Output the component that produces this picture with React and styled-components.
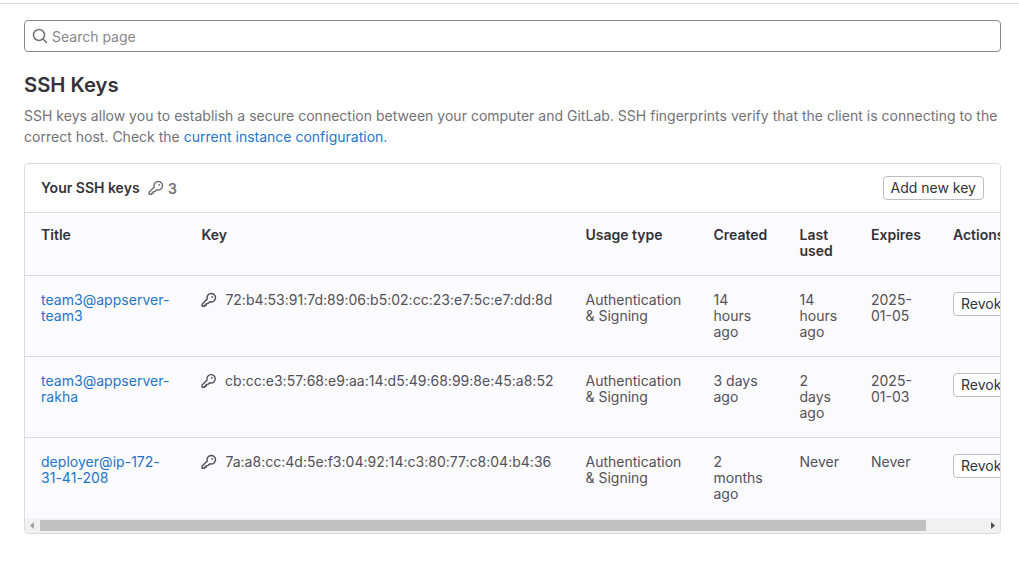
import React from "react";
import styled, { createGlobalStyle } from "styled-components";

const GlobalStyle = createGlobalStyle`
  *, *::before, *::after { box-sizing: border-box; }
  body {
    margin: 0;
    background: #fff;
    color: #333238;
    font-family: Inter, "Noto Sans", sans-serif;
    font-size: 14px;
    line-height: 16px;
  }
`;

const Page = styled.div`
  height: 586px;
  overflow: hidden;
  padding-top: 3px;
`;

const Main = styled.main`
  border-top: 1px solid #dcdcde;
  padding: 16px 18px 0 24px;
`;

const SearchBox = styled.label`
  display: flex;
  align-items: center;
  gap: 4px;
  height: 32px;
  padding: 0 7px;
  border: 1px solid #89888d;
  border-radius: 4px;
  color: #737278;
`;

const SearchInput = styled.input`
  flex: 1;
  min-width: 0;
  padding: 2px 0 0;
  border: 0;
  outline: 0;
  background: transparent;
  font: inherit;
  line-height: 16px;
  &::placeholder { color: #89888d; opacity: 1; }
`;

const Heading = styled.h1`
  margin: 20px 0 8px;
  font-size: 20.3px;
  line-height: 25px;
  font-weight: 600;
  letter-spacing: -0.03px;
`;

const Intro = styled.p`
  margin: 0 0 16px;
  color: #737278;
  line-height: 21px;
  letter-spacing: 0.012px;
`;

const Link = styled.a`
  color: #1f75cb;
  text-decoration: none;
  letter-spacing: 0;
`;

const TitleLink = styled(Link)`
  letter-spacing: 0.03px;
`;

const Card = styled.section`
  border: 1px solid #dcdcde;
  border-radius: 4px;
  overflow: hidden;
  background: #fbfafd;
`;

const CardHeader = styled.header`
  display: flex;
  align-items: center;
  height: 49px;
  padding: 0 16px;
  background: #fff;
  border-bottom: 1px solid #dcdcde;
`;

const CardTitle = styled.h2`
  margin: 0 8.7px 0 0;
  font-size: 14px;
  font-weight: 600;
`;

const Count = styled.span`
  display: flex;
  align-items: center;
  gap: 3.8px;
  flex: 1;
  color: #737278;
  font-weight: 600;
`;

const CountValue = styled.span`
  padding-top: 2px;
`;

const Button = styled.button`
  height: 24px;
  padding: 0 7px;
  border: 1px solid #bfbfc3;
  border-radius: 4px;
  background: #fff;
  color: #333238;
  font: inherit;
  line-height: 16px;
  white-space: nowrap;
`;

const Scroller = styled.div`
  overflow: hidden;
`;

const Row = styled.div`
  display: grid;
  grid-template-columns: 160.4px 384.1px 128px 86px 71.5px 82px 107px;
  width: 1019px;
  height: ${(p) => p.$height}px;
  padding-top: ${(p) => p.$top}px;
  border-bottom: ${(p) => (p.$last ? 0 : 1)}px solid #dcdcde;
  color: ${(p) => (p.$head ? "#333238" : "#535158")};
  font-weight: ${(p) => (p.$head ? 600 : 400)};
`;

const Cell = styled.div`
  padding: 0 16px;
`;

const Fingerprint = styled(Cell)`
  display: flex;
  gap: 8px;
  white-space: nowrap;
  letter-spacing: 0.01px;
`;

const Track = styled.div`
  display: flex;
  align-items: center;
  height: 15px;
  background: #f1f1f1;
`;

const ArrowSlot = styled.span`
  display: flex;
  justify-content: flex-start;
  width: 15px;
  padding-left: ${(p) => p.$inset}px;
  color: ${(p) => p.$color};
`;

const ThumbArea = styled.div`
  flex: 1;
`;

const Thumb = styled.div`
  width: 886px;
  height: 11px;
  background: #c1c1c1;
`;

const KeyIcon = () => (
  <svg width="16" height="16" viewBox="0 0 16 16" fill="none" stroke="currentColor" strokeWidth="1.45">
    <path d="M6.25 7.1A4.25 4.25 0 1 1 8.9 9.75L7 11.6H5.2v1.7H3.7v1H1.1v-2.1z" strokeLinejoin="round" />
    <circle cx="11.1" cy="4.9" r=".9" fill="currentColor" stroke="none" />
  </svg>
);

const SearchIcon = () => (
  <svg width="16" height="16" viewBox="0 0 16 16" fill="none" stroke="currentColor" strokeWidth="1.5">
    <circle cx="7" cy="7" r="5.5" />
    <path d="M11 11 14.4 14.4" strokeLinecap="round" />
  </svg>
);

const keys = [
  { title: ["team3@appserver-", "team3"], print: "72:b4:53:91:7d:89:06:b5:02:cc:23:e7:5c:e7:dd:8d", created: ["14", "hours", "ago"], used: ["14", "hours", "ago"], expires: ["2025-", "01-05"] },
  { title: ["team3@appserver-", "rakha"], print: "cb:cc:e3:57:68:e9:aa:14:d5:49:68:99:8e:45:a8:52", created: ["3 days", "ago"], used: ["2", "days", "ago"], expires: ["2025-", "01-03"] },
  { title: ["deployer@ip-172-", "31-41-208"], print: "7a:a8:cc:4d:5e:f3:04:92:14:c3:80:77:c8:04:b4:36", created: ["2", "months", "ago"], used: ["Never"], expires: ["Never"] },
];

const Line = styled.span`
  display: block;
  white-space: nowrap;
`;

const Lines = ({ of }) => of.map((text) => <Line key={text}>{text}</Line>);

export default function App() {
  return (
    <Page>
      <GlobalStyle />
      <Main>
        <SearchBox>
          <SearchIcon />
          <SearchInput placeholder="Search page" />
        </SearchBox>
        <Heading>SSH Keys</Heading>
        <Intro>
          SSH keys allow you to establish a secure connection between your computer and GitLab. SSH fingerprints verify that the client is connecting to the
          <br />
          correct host. Check the <Link>current instance configuration.</Link>
        </Intro>
        <Card>
          <CardHeader>
            <CardTitle>Your SSH keys</CardTitle>
            <Count><KeyIcon /><CountValue>3</CountValue></Count>
            <Button>Add new key</Button>
          </CardHeader>
          <Scroller>
            <Row $head $height={63} $top={14}>
              <Cell>Title</Cell>
              <Cell>Key</Cell>
              <Cell>Usage type</Cell>
              <Cell>Created</Cell>
              <Cell><Lines of={["Last", "used"]} /></Cell>
              <Cell>Expires</Cell>
              <Cell>Actions</Cell>
            </Row>
            {keys.map((k, i) => (
              <Row key={k.print} $height={i === 2 ? 80 : 81} $top={16} $last={i === 2}>
                <Cell><TitleLink><Lines of={k.title} /></TitleLink></Cell>
                <Fingerprint><KeyIcon />{k.print}</Fingerprint>
                <Cell><Lines of={["Authentication", "& Signing"]} /></Cell>
                <Cell><Lines of={k.created} /></Cell>
                <Cell><Lines of={k.used} /></Cell>
                <Cell><Lines of={k.expires} /></Cell>
                <Cell><Button>Revoke</Button></Cell>
              </Row>
            ))}
          </Scroller>
          <Track>
            <ArrowSlot $color="#a3a3a3" $inset={5}>
              <svg width="4" height="7" viewBox="0 0 4 7"><path d="M4 0v7L0 3.5z" fill="currentColor" /></svg>
            </ArrowSlot>
            <ThumbArea><Thumb /></ThumbArea>
            <ArrowSlot $color="#505050" $inset={6}>
              <svg width="4" height="7" viewBox="0 0 4 7"><path d="M0 0v7l4-3.5z" fill="currentColor" /></svg>
            </ArrowSlot>
          </Track>
        </Card>
      </Main>
    </Page>
  );
}
